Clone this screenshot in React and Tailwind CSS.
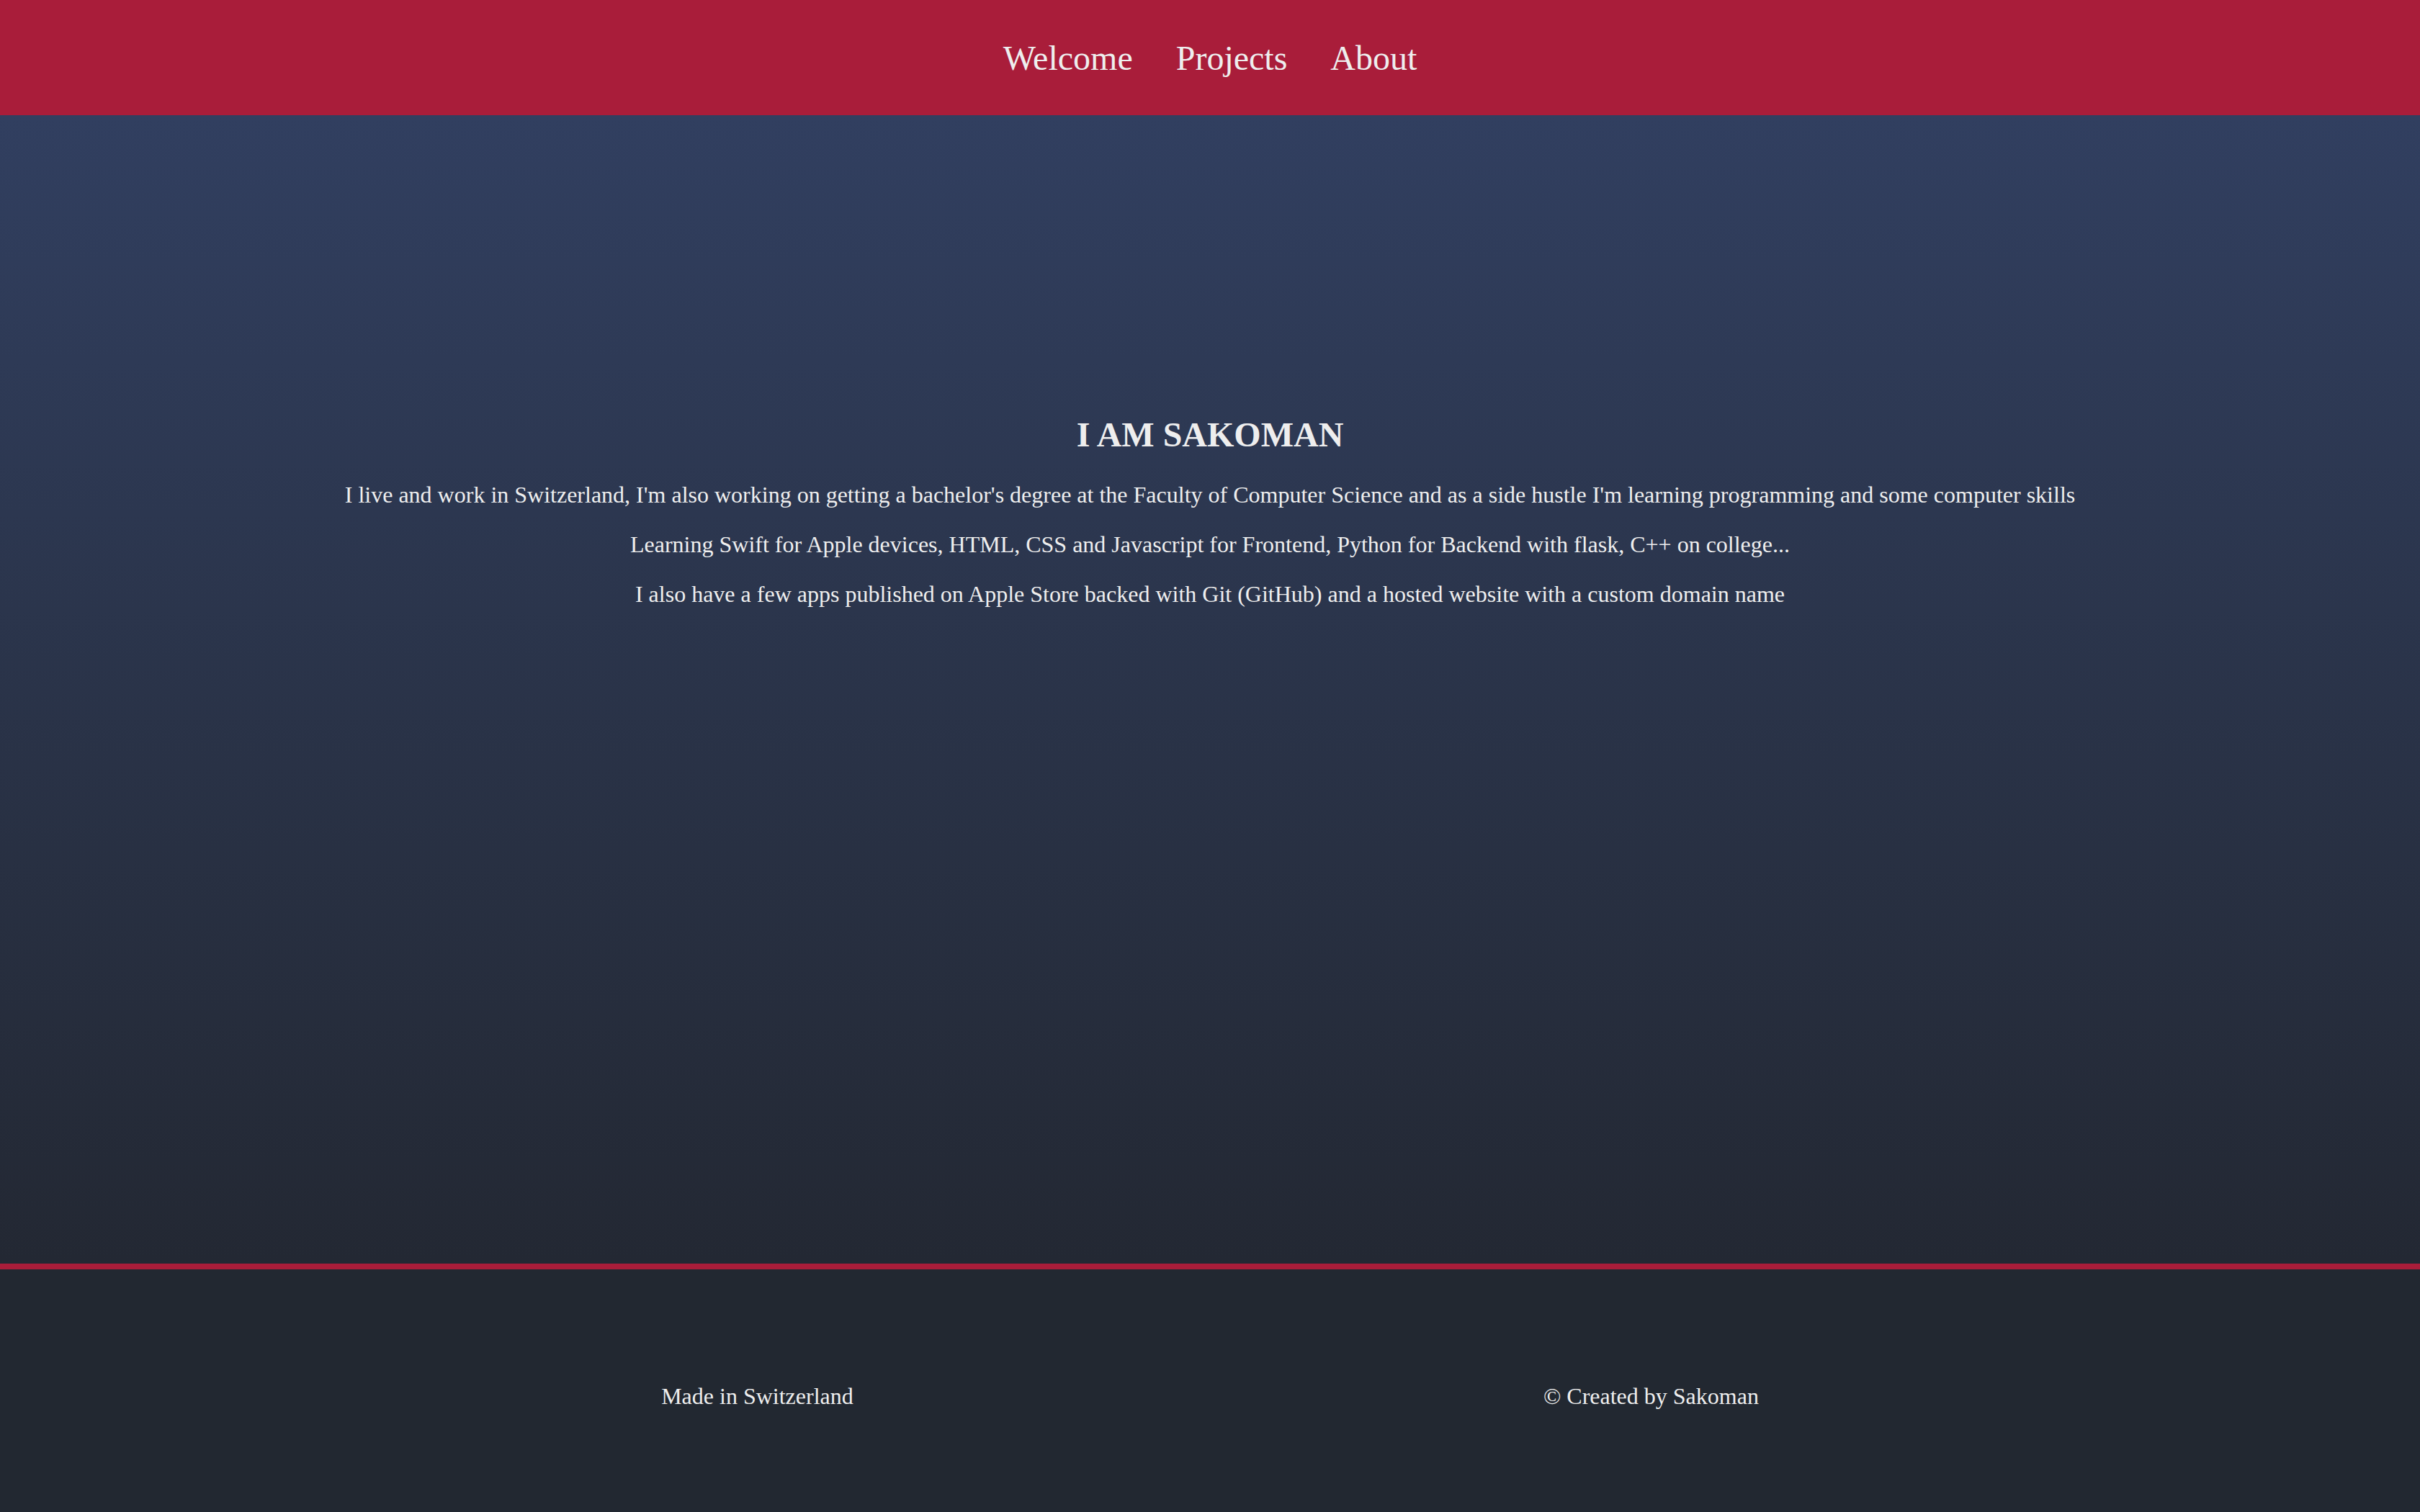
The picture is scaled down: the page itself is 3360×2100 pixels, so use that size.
const navLinks = ["Welcome", "Projects", "About"];

const aboutLines = [
  "I live and work in Switzerland, I'm also working on getting a bachelor's degree at the Faculty of Computer Science and as a side hustle I'm learning programming and some computer skills",
  "Learning Swift for Apple devices, HTML, CSS and Javascript for Frontend, Python for Backend with flask, C++ on college...",
  "I also have a few apps published on Apple Store backed with Git (GitHub) and a hosted website with a custom domain name",
];

function Header() {
  return (
    <header className="flex h-[160px] items-center justify-center bg-[#a91d3a]">
      <nav className="flex gap-[60px] pt-[2px]">
        {navLinks.map((link) => (
          <a
            key={link}
            href="#"
            className="text-[48px] leading-[1.15] text-[#eeeeee] no-underline"
          >
            {link}
          </a>
        ))}
      </nav>
    </header>
  );
}

function Hero() {
  return (
    <main className="h-[1595px] bg-gradient-to-b from-[#313f60] to-[#232833] pt-[416px] text-center text-[#eeeeee]">
      <h2 className="text-[48px] font-bold leading-[1.15]">I AM SAKOMAN</h2>
      <div className="mt-[38px] flex flex-col gap-[32px]">
        {aboutLines.map((line) => (
          <p key={line} className="text-[32px] leading-[1.15]">
            {line}
          </p>
        ))}
      </div>
    </main>
  );
}

function Footer() {
  return (
    <footer className="flex h-[345px] items-center border-t-[8px] border-[#a91d3a] bg-[#222831] pt-[16px]">
      <div className="mx-auto flex w-[2482px] justify-around text-[32px] leading-[1.15] text-[#eeeeee]">
        <p>Made in Switzerland</p>
        <p>© Created by Sakoman</p>
      </div>
    </footer>
  );
}

export default function App() {
  return (
    <div className="min-h-screen bg-[#222831] font-['Liberation_Serif','Times_New_Roman',serif]">
      <Header />
      <Hero />
      <Footer />
    </div>
  );
}
